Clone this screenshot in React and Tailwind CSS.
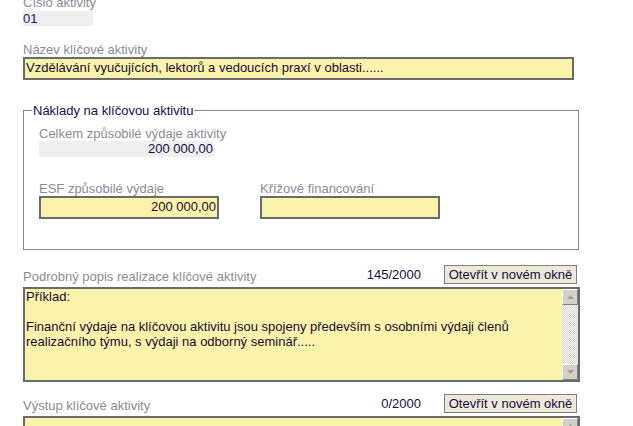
import React from 'react';

function Label({ children, className = '' }) {
  return <div className={`text-[13px] leading-[15px] text-[#8b8b98] ${className}`}>{children}</div>;
}

function ScrollBar() {
  return (
    <div className="absolute right-0 top-0 bottom-0 w-[16px] flex flex-col bg-[repeating-conic-gradient(#ffffff_0_25%,#d4d0c8_0_50%)] bg-[length:2px_2px]">
      <div className="h-[16px] bg-[#d4d0c8] border border-t-white border-l-white border-r-[#808080] border-b-[#808080] flex items-center justify-center">
        <svg width="7" height="4" viewBox="0 0 7 4"><path d="M3.5 0 L7 4 L0 4 Z" fill="#a0a0a0" /></svg>
      </div>
      <div className="flex-1" />
      <div className="h-[16px] bg-[#d4d0c8] border border-t-white border-l-white border-r-[#808080] border-b-[#808080] flex items-center justify-center">
        <svg width="7" height="4" viewBox="0 0 7 4"><path d="M0 0 L7 0 L3.5 4 Z" fill="#a0a0a0" /></svg>
      </div>
    </div>
  );
}

function Counter({ label, count }) {
  return (
    <div className="flex items-end justify-between w-[554px]">
      <Label>{label}</Label>
      <div className="flex items-center">
        <span className="text-[13px] leading-[15px] text-[#1a0a40] mr-[23px]">{count}</span>
        <button className="h-[19px] w-[133px] bg-[#ece9d8] border border-[#7f7f7f] text-[13px] leading-[15px] text-[#1a0a40]">Otevřít v novém okně</button>
      </div>
    </div>
  );
}

export default function App() {
  return (
    <div className="w-[633px] h-[426px] overflow-hidden bg-white font-['Liberation_Sans',Arial,sans-serif]">
      <div className="pl-[23px] -mt-[5px]">
        <Label>Číslo aktivity</Label>
        <div className="mt-[1px] w-[70px] h-[15px] bg-[#efefef] text-[13px] leading-[15px] text-[#3a0a5a]">01</div>

        <Label className="mt-[16px]">Název klíčové aktivity</Label>
        <div className="w-[551px] h-[23px] border-2 border-[#6b6b6b] bg-[#faf3ab] px-[1px] text-[13px] leading-[18px] text-[#1a0a30]">
          Vzdělávání vyučujících, lektorů a vedoucích praxí v oblasti......
        </div>

        <fieldset className="mt-[23px] w-[556px] h-[147px] border border-[#878787] pl-[15px] pt-[8px]">
          <legend className="ml-[-7px] px-[1px] text-[13px] leading-[15px] text-[#1a0a50]">Náklady na klíčovou aktivitu</legend>
          <Label>Celkem způsobilé výdaje aktivity</Label>
          <div className="w-[175px] h-[16px] bg-[#efefef] text-right pr-[1px] text-[13px] leading-[16px] text-[#1a0a40]">200 000,00</div>

          <div className="mt-[24px] flex gap-[41px]">
            <div>
              <Label>ESF způsobilé výdaje</Label>
              <div className="w-[180px] h-[23px] border-2 border-[#6b6b6b] bg-[#faf3ab] text-right pr-[1px] text-[13px] leading-[18px] text-[#1a0a30]">200 000,00</div>
            </div>
            <div>
              <Label>Křížové financování</Label>
              <div className="w-[180px] h-[23px] border-2 border-[#6b6b6b] bg-[#faf3ab]" />
            </div>
          </div>
        </fieldset>

        <div className="mt-[15px]">
          <Counter label="Podrobný popis realizace klíčové aktivity" count="145/2000" />
        </div>
        <div className="relative mt-[3px] w-[557px] h-[95px] border-2 border-[#6b6b6b] bg-[#faf3ab]">
          <div className="pl-[1px] pr-[20px] text-[13px] leading-[15px] text-[#1a0a30] whitespace-pre-wrap">
            {'Příklad:\n\nFinanční výdaje na klíčovou aktivitu jsou spojeny především s osobními výdaji členů realizačního týmu, s výdaji na odborný seminář.....'}
          </div>
          <ScrollBar />
        </div>

        <div className="mt-[12px]">
          <Counter label="Výstup klíčové aktivity" count="0/2000" />
        </div>
        <div className="relative mt-[3px] w-[557px] h-[96px] border-2 border-[#6b6b6b] bg-[#faf3ab]">
          <ScrollBar />
        </div>
      </div>
    </div>
  );
}
